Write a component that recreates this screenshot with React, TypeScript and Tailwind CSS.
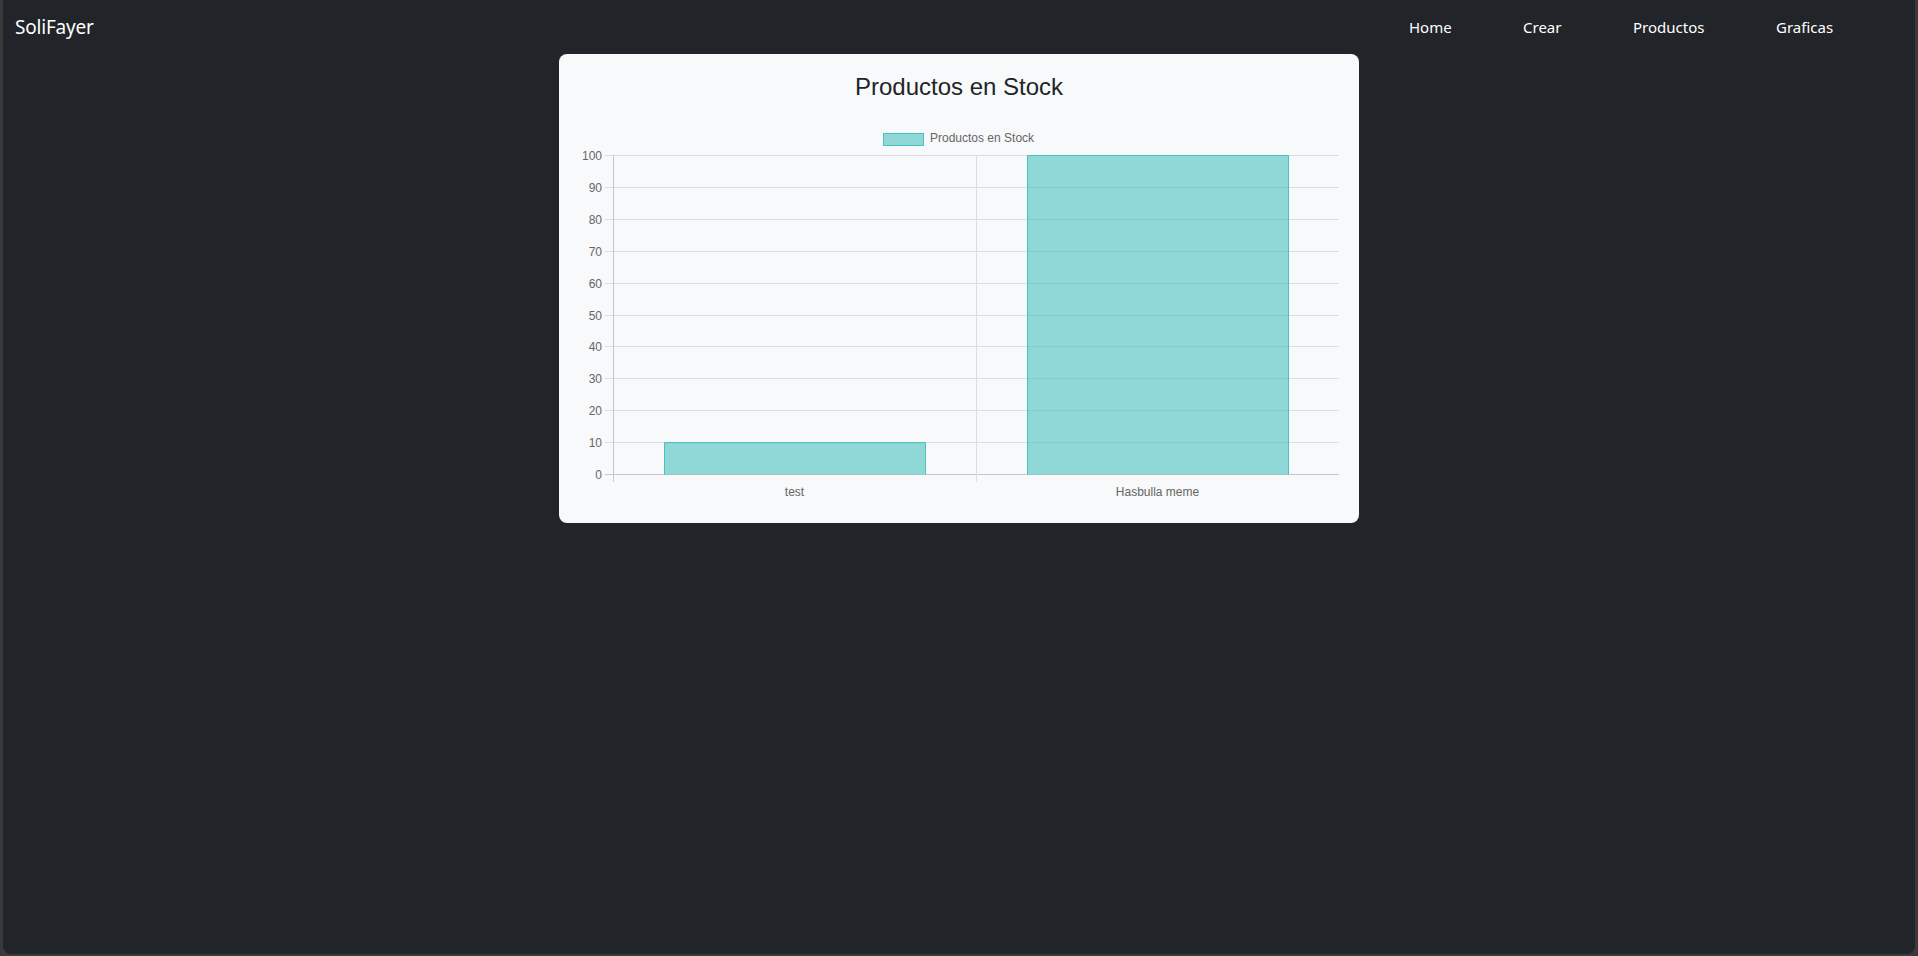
import React from "react";

const ticks = [0, 10, 20, 30, 40, 50, 60, 70, 80, 90, 100];
const X0 = 54;
const X1 = 780;
const Y0 = 420;
const YT = 101;
const yOf = (v: number) => Y0 - ((Y0 - YT) * v) / 100;

function Chart() {
  const mid = (X0 + X1) / 2;
  const bars = [
    { label: "test", value: 10, x: 105, w: 261 },
    { label: "Hasbulla meme", value: 100, x: 468, w: 261 },
  ];
  return (
    <svg width={800} height={422} viewBox="0 47 800 422" className="block">
      {/* legend */}
      <rect x={324.5} y={79.5} width={40} height={12} fill="rgba(75,192,192,0.6)" stroke="rgb(75,192,192)" strokeWidth={1} />
      <text x={371} y={87.5} fontSize={12} fill="#666" fontFamily="'Liberation Sans', Arial, sans-serif">
        Productos en Stock
      </text>
      {/* horizontal grid + tick marks */}
      {ticks.map((t) => {
        const y = Math.round(yOf(t)) + 0.5;
        return (
          <g key={t}>
            <line x1={X0 - 8} x2={X1} y1={y} y2={y} stroke={t === 0 ? "#c6c7c8" : "#dcdddf"} strokeWidth={1} />
            <text x={43} y={y + 4} fontSize={12} textAnchor="end" fill="#666" fontFamily="'Liberation Sans', Arial, sans-serif">
              {t}
            </text>
          </g>
        );
      })}
      {/* vertical grid */}
      <line x1={X0 + 0.5} x2={X0 + 0.5} y1={YT} y2={Y0 + 8} stroke="#c6c7c8" strokeWidth={1} />
      <line x1={mid + 0.5} x2={mid + 0.5} y1={YT} y2={Y0 + 8} stroke="#dcdddf" strokeWidth={1} />
      {/* bars */}
      {bars.map((b) => {
        const top = yOf(b.value);
        return (
          <g key={b.label}>
            <rect x={b.x + 0.5} y={top} width={b.w} height={Y0 - top + 0.5} fill="rgba(75,192,192,0.6)" />
            <path
              d={`M${b.x + 0.5} ${Y0 + 0.5} V${top + 0.5} H${b.x + b.w + 0.5} V${Y0 + 0.5}`}
              fill="none"
              stroke="rgb(75,192,192)"
              strokeWidth={1}
            />
          </g>
        );
      })}
      {/* x labels */}
      <text x={(X0 + mid) / 2} y={442} fontSize={12} textAnchor="middle" fill="#666" fontFamily="'Liberation Sans', Arial, sans-serif">
        test
      </text>
      <text x={(mid + X1) / 2} y={442} fontSize={12} textAnchor="middle" fill="#666" fontFamily="'Liberation Sans', Arial, sans-serif">
        Hasbulla meme
      </text>
    </svg>
  );
}

export default function App() {
  return (
    <div className="w-full h-[956px] bg-[#3a3a3a] px-[3px] pb-[2px] overflow-hidden">
      <div className="h-full bg-[#212529] rounded-b-[8px] flex flex-col">
        <nav
          className="h-[54px] flex items-center pl-[12px] text-white"
          style={{ fontFamily: "'Noto Sans', 'Open Sans', sans-serif" }}
        >
          <span className="text-[19px] leading-none tracking-[-0.2px] pt-[1px]">SoliFayer</span>
          <ul className="ml-auto flex text-[15px]">
            <li className="w-[114px]">Home</li>
            <li className="w-[110px]">Crear</li>
            <li className="w-[143px]">Productos</li>
            <li className="w-[139px]">Graficas</li>
          </ul>
        </nav>
        <div className="flex justify-center">
          <div className="w-[800px] h-[469px] bg-[#f8f9fa] rounded-[8px] flex flex-col items-center pt-[18px]">
            <div
              className="text-[24px] leading-[29px] text-[#212529]"
              style={{ fontFamily: "'Liberation Sans', Arial, sans-serif" }}
            >
              Productos en Stock
            </div>
            <Chart />
          </div>
        </div>
      </div>
    </div>
  );
}
